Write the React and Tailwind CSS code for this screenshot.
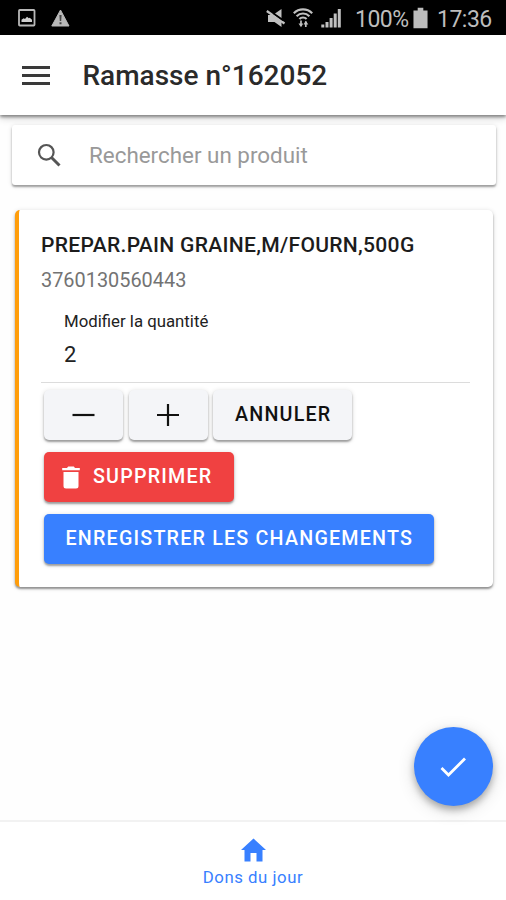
import React from 'react';

function StatusBar() {
  return (
    <div className="flex h-[35px] items-center bg-black text-[#bdbdbd]">
      <svg className="ml-[18px] h-[18px] w-[18px]" viewBox="0 0 18 18" fill="none">
        <rect x="1" y="1" width="15.5" height="15.5" rx="0.8" stroke="#b8b8b8" strokeWidth="1.8" />
        <path d="M3.5 13v-2.2l2.2-1.6 1.3.7 2-2.1 1.8 1.4 1-.5 2.2 2.1V13z" fill="#d0d0d0" />
      </svg>
      <svg className="ml-[15px] h-[18px] w-[19px]" viewBox="0 0 19 18">
        <path d="M9.5 1 18 17H.8z" fill="#b8b8b8" stroke="#b8b8b8" strokeLinejoin="round" />
        <path d="M8.4 6h2.2l-.4 6H8.8zM8.5 13.3h2v2h-2z" fill="#444" />
      </svg>
      <svg className="ml-auto h-[20px] w-[20px]" viewBox="0 0 20 20" fill="#c0c0c0">
        <path d="M15.500 1v9L9 5.500zM2 7h4l9.500 7v5L8.500 14H2z" />
        <path d="M.8 3 18.500 15.500" stroke="#c0c0c0" strokeWidth="2.200" />
        <path d="m7 5.300 10 7.100" stroke="#000" strokeWidth="1.200" />
      </svg>
      <svg className="ml-[7px] h-[20px] w-[20px]" viewBox="0 0 20 20" fill="none" stroke="#c0c0c0" strokeWidth="2.200">
        <path d="M.8 5.200C6 .2 14 .2 19.200 5.200M3.600 8.200c3.600-3.600 9.200-3.600 12.800 0M6.400 11c2-2 5.200-2 7.200 0" />
        <path d="M8 12.500V18M12.800 19v-5.500" strokeWidth="1.700" />
        <path d="m5.500 15.500 2.500 3.800 2.300-3.800zM10.500 16.500l2.300-3.800 2.500 3.800z" fill="#c0c0c0" stroke="none" />
      </svg>
      <svg className="ml-[8px] h-[20px] w-[20px]" viewBox="0 0 20 20" fill="#c0c0c0">
        <path d="M.3 16.500h3V19.500h-3zM4.500 14h3v5.500h-3zM8.600 10h3v9.500h-3zM12.700 5.500h3v14h-3zM16.800 1h3v18.500h-3z" />
      </svg>
      <span className="mt-[3px] ml-[14px] w-[55px] whitespace-nowrap text-[23px] leading-[35px] tracking-[-0.500px]">100%</span>
      <svg className="ml-[3px] h-[22px] w-[15px]" viewBox="0 0 16 22" fill="#bdbdbd">
        <path d="M5 0h6v3h4.500v19H.5V3H5z" />
      </svg>
      <span className="mt-[3px] mr-[14px] ml-[9px] w-[55px] whitespace-nowrap text-[23px] leading-[35px] tracking-[-0.500px]">17:36</span>
    </div>
  );
}

function Header() {
  return (
    <header className="relative flex h-[80px] items-center bg-white shadow-[0_2px_3px_rgba(0,0,0,0.42),0_4px_7px_rgba(0,0,0,0.14)]">
      <div className="ml-[22px] flex w-[28px] flex-col gap-[5px]">
        <div className="h-[3px] bg-[#3a3a3a]" />
        <div className="h-[3px] bg-[#3a3a3a]" />
        <div className="h-[3px] bg-[#3a3a3a]" />
      </div>
      <h1 className="mt-[1px] ml-[32.500px] whitespace-nowrap text-[28px] font-medium text-[#2a2a2a]">Ramasse n°162052</h1>
    </header>
  );
}

const raised = 'rounded-[5px] shadow-[0_2px_2px_rgba(0,0,0,0.32),0_1px_5px_rgba(0,0,0,0.16)]';

function Button({ className, children }) {
  return (
    <button className={`flex h-[50px] items-center whitespace-nowrap text-[19.700px] font-medium tracking-[1.200px] ${raised} ${className}`}>
      {children}
    </button>
  );
}

function ProductCard() {
  return (
    <section className="mt-[25px] mr-[13px] ml-[15px] h-[377px] rounded-[5px] border-l-[4px] border-[#ff9d0a] bg-white shadow-[0_2px_2px_rgba(0,0,0,0.36),0_1px_5px_rgba(0,0,0,0.16)]">
      <div className="pl-[22px]">
        <h2 className="pt-[20px] text-[21.100px] leading-[29px] font-medium tracking-[0.280px] whitespace-nowrap text-[#1c1c1c]">PREPAR.PAIN GRAINE,M/FOURN,500G</h2>
        <p className="mt-[9px] text-[19.900px] leading-[26px] text-[#737373]">3760130560443</p>
        <div className="mr-[23px] h-[89px] border-b-[1.500px] border-[#dcdcdc] pl-[23px]">
          <div className="pt-[17px] text-[16.800px] leading-[20px] text-[#222]">Modifier la quantité</div>
          <div className="mt-[11px] text-[22px] leading-[26px] text-[#222]">2</div>
        </div>
        <div className="mt-[7px] ml-[3px] flex gap-[5.500px]">
          <Button className="w-[79px] justify-center bg-[#f4f5f8]">
            <svg className="h-[24px] w-[24px]" viewBox="0 0 24 24"><path d="M.5 12h22" stroke="#111" strokeWidth="2.200" /></svg>
          </Button>
          <Button className="w-[79px] justify-center bg-[#f4f5f8]">
            <svg className="h-[24px] w-[24px]" viewBox="0 0 24 24"><path d="M1 12h22M12 1v22" stroke="#111" strokeWidth="2.200" /></svg>
          </Button>
          <Button className="w-[139px] bg-[#f4f5f8] pl-[22px] text-[#111]">ANNULER</Button>
        </div>
        <div className="mt-[12px] ml-[3px] flex">
          <Button className="w-[190px] bg-[#f04141] pl-[18px] text-white">
            <svg className="mr-[13px] h-[23px] w-[18px]" viewBox="0 0 18 23" fill="#fff">
              <path d="M1.500 6h15v14q0 2.500-2.500 2.500H4q-2.500 0-2.500-2.500zM.2 2H5l1.200-1.500h5.600L13 2h4.800v2.200H.2z" />
            </svg>
            SUPPRIMER
          </Button>
        </div>
        <div className="mt-[12px] ml-[3px] flex">
          <Button className="w-[390px] bg-[#3880ff] pl-[21.500px] text-white">ENREGISTRER LES CHANGEMENTS</Button>
        </div>
      </div>
    </section>
  );
}

export default function App() {
  return (
    <div className="flex h-[900px] w-[506px] flex-col overflow-hidden bg-[#fefefe] font-[Roboto,sans-serif]">
      <StatusBar />
      <Header />
      <main className="relative flex-1">
        <div className="mt-[10px] mr-[10px] ml-[12px] flex h-[60px] items-center rounded-[3px] bg-white shadow-[0_2px_2px_rgba(0,0,0,0.32),0_1px_5px_rgba(0,0,0,0.14)]">
          <svg className="ml-[25px] h-[24px] w-[24px]" viewBox="0 0 24 24" fill="none" stroke="#555" strokeWidth="2.200">
            <circle cx="9.300" cy="9.300" r="7.300" />
            <path d="m14.500 14.500 8 8" strokeWidth="3" />
          </svg>
          <span className="mt-[2px] ml-[28px] text-[22.400px] text-[#999]">Rechercher un produit</span>
        </div>
        <ProductCard />
        <button className="absolute right-[13px] bottom-[14px] flex h-[79px] w-[79px] items-center justify-center rounded-full bg-[#3880ff] shadow-[0_4px_7px_rgba(0,0,0,0.28),0_4px_18px_rgba(0,0,0,0.14)]">
          <svg className="mr-[1px] h-[20px] w-[26px]" viewBox="0 0 26 20" fill="none" stroke="#fff" strokeWidth="2.800"><path d="m1.500 11 7 7L25 1.500" /></svg>
        </button>
      </main>
      <nav className="flex h-[80px] flex-col items-center border-t-[2px] border-[#f2f2f2] bg-white text-[#3880ff]">
        <svg className="mt-[16px] h-[24px] w-[25px]" viewBox="0 0 25 24" fill="currentColor">
          <path d="M12.500.5 25 12h-3.500v11.500h-6V15h-6v8.500h-6V12H0z" />
        </svg>
        <span className="mt-[3px] text-[16.800px] leading-[24px] tracking-[0.520px]">Dons du jour</span>
      </nav>
    </div>
  );
}
